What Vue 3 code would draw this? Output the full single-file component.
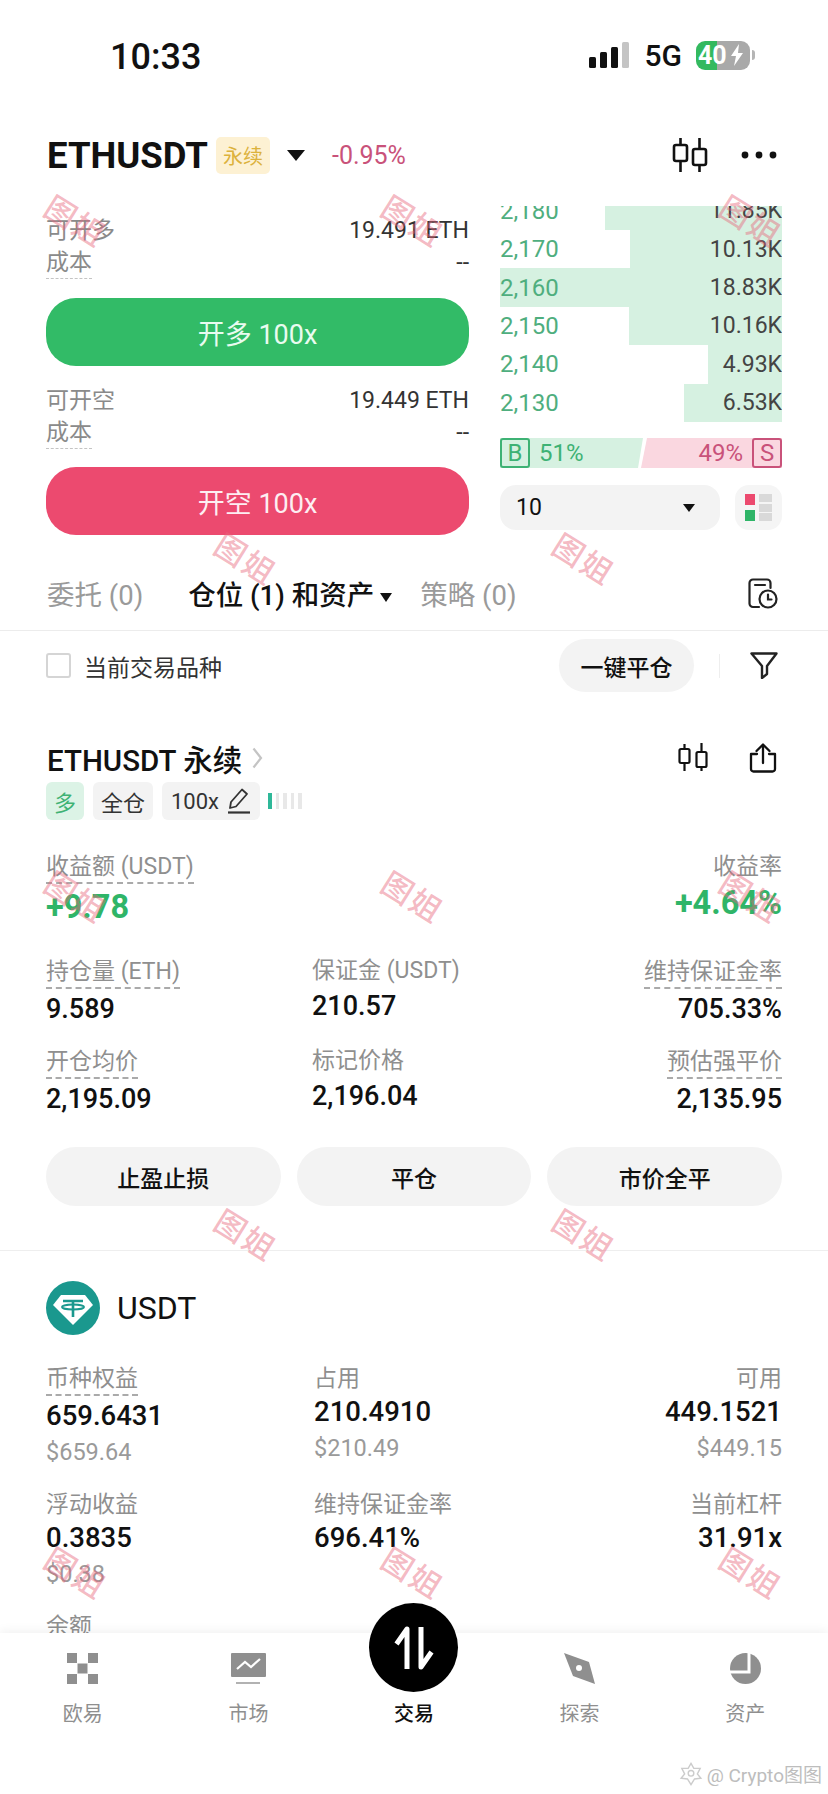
<script setup>
const book = [
  { price: '2,180', vol: '11.85K', width: 177 },
  { price: '2,170', vol: '10.13K', width: 152 },
  { price: '2,160', vol: '18.83K', width: 282 },
  { price: '2,150', vol: '10.16K', width: 153 },
  { price: '2,140', vol: '4.93K', width: 74 },
  { price: '2,130', vol: '6.53K', width: 98 }
]

const orderForms = [
  { label: '可开多', qty: '19.491 ETH', action: '开多 100x', kind: 'long' },
  { label: '可开空', qty: '19.449 ETH', action: '开空 100x', kind: 'short' }
]

const stats = [
  { label: '持仓量 (ETH)', value: '9.589', dash: true },
  { label: '保证金 (USDT)', value: '210.57', mid: true },
  { label: '维持保证金率', value: '705.33%', dash: true, end: true },
  { label: '开仓均价', value: '2,195.09', dash: true },
  { label: '标记价格', value: '2,196.04', mid: true },
  { label: '预估强平价', value: '2,135.95', dash: true, end: true }
]

const assets = [
  { label: '币种权益', value: '659.6431', sub: '$659.64', dash: true },
  { label: '占用', value: '210.4910', sub: '$210.49' },
  { label: '可用', value: '449.1521', sub: '$449.15', end: true },
  { label: '浮动收益', value: '0.3835', sub: '$0.38' },
  { label: '维持保证金率', value: '696.41%' },
  { label: '当前杠杆', value: '31.91x', end: true }
]

const marks = []
for (let row = 0; row < 5; row++) {
  const xs = row % 2 ? [245, 583] : [75, 412, 750]
  xs.forEach((x) => marks.push({ x, y: 222 + row * 338 }))
}
</script>

<template>
  <div class="phone">
    <div class="content">
      <!-- STATUS BAR -->
      <div class="status">
        <span class="clock">10:33</span>
        <div class="status-right">
          <svg width="41" height="26" viewBox="0 0 41 26">
            <rect x="0" y="15" width="7" height="11" rx="1.5" fill="#111" />
            <rect x="11" y="10" width="7" height="16" rx="1.5" fill="#111" />
            <rect x="22" y="5" width="7" height="21" rx="1.5" fill="#111" />
            <rect x="33" y="0" width="7" height="26" rx="1.5" fill="#c4c4c4" />
          </svg>
          <span class="net">5G</span>
          <div class="battery">
            <span>40</span>
            <svg width="14" height="22" viewBox="0 0 14 22"><path d="M9 0 L1 12 H6 L4 22 L13 9 H8 Z" fill="#fff" /></svg>
          </div>
          <i class="nub"></i>
        </div>
      </div>

      <!-- HEADER -->
      <div class="head">
        <span class="symbol">ETHUSDT</span>
        <span class="perp">永续</span>
        <i class="caret big"></i>
        <span class="change">-0.95%</span>
        <div class="head-icons">
          <svg width="37" height="36" viewBox="0 0 37 36" fill="none" stroke="#111" stroke-width="2.6" stroke-linejoin="round">
            <rect x="2" y="8" width="13" height="16" rx="2" />
            <path d="M8.5 1V8M8.5 24V35" />
            <rect x="21" y="12" width="13" height="16" rx="2" />
            <path d="M27.5 1V12M27.5 28V35" />
          </svg>
          <svg width="36" height="8" viewBox="0 0 36 8" fill="#111">
            <circle cx="4" cy="4" r="3.4" /><circle cx="18" cy="4" r="3.4" /><circle cx="32" cy="4" r="3.4" />
          </svg>
        </div>
      </div>

      <!-- ORDER PANEL + BOOK -->
      <div class="trade">
        <div class="forms">
          <div v-for="f in orderForms" :key="f.kind" class="form">
            <div class="form-row">
              <span class="muted">{{ f.label }}</span>
              <span class="qty">{{ f.qty }}</span>
            </div>
            <div class="form-row">
              <span class="muted cost">成本</span>
              <span class="qty">--</span>
            </div>
            <button class="open" :class="f.kind">{{ f.action }}</button>
          </div>
        </div>

        <div class="side">
          <div class="book">
            <div class="book-list">
              <div v-for="b in book" :key="b.price" class="book-row">
                <i class="depth" :style="{ width: b.width + 'px' }"></i>
                <span class="price">{{ b.price }}</span>
                <span class="vol">{{ b.vol }}</span>
              </div>
            </div>
          </div>

          <div class="ratio">
            <div class="buy"><b>B</b>51%</div>
            <div class="sell">49%<b>S</b></div>
          </div>

          <div class="book-ctrl">
            <div class="depth-select">
              <span>10</span>
              <i class="caret"></i>
            </div>
            <div class="layout-btn">
              <svg width="27" height="27" viewBox="0 0 27 27">
                <rect x="0" y="0" width="10" height="11" fill="#ec4a6f" />
                <rect x="0" y="16" width="10" height="11" fill="#2fb568" />
                <rect x="14" y="0" width="13" height="8" fill="#d9d9d9" />
                <rect x="14" y="10" width="13" height="8" fill="#d9d9d9" />
                <rect x="14" y="19" width="13" height="8" fill="#d9d9d9" />
              </svg>
            </div>
          </div>
        </div>
      </div>

      <!-- TABS -->
      <div class="tabs">
        <span class="tab">委托 (0)</span>
        <span class="tab on">仓位 (1) 和资产<i class="caret small"></i></span>
        <span class="tab">策略 (0)</span>
        <svg class="tab-icon" width="30" height="31" viewBox="0 0 30 31" fill="none" stroke="#222" stroke-width="2.2" stroke-linecap="round">
          <path d="M11 29H5a3.5 3.5 0 0 1-3.5-3.5V5A3.5 3.5 0 0 1 5 1.5h14A3.5 3.5 0 0 1 22.5 5V10" />
          <path d="M7 7H17" />
          <circle cx="20" cy="21" r="8.5" />
          <path d="M20 16.5V21.5H23.5" />
        </svg>
      </div>

      <!-- FILTER -->
      <div class="filter">
        <i class="check"></i>
        <span class="filter-label">当前交易品种</span>
        <button class="close-all">一键平仓</button>
        <i class="sep"></i>
        <svg width="28" height="27" viewBox="0 0 28 27" fill="none" stroke="#222" stroke-width="2.4" stroke-linejoin="round">
          <path d="M1.5 1.5H26.5L17 14V22L12 26V14Z" />
        </svg>
      </div>

      <!-- POSITION -->
      <div class="position">
        <div class="pos-title">
          <span class="pos-name">ETHUSDT 永续</span>
          <svg width="11" height="22" viewBox="0 0 11 22" fill="none" stroke="#c4c4c4" stroke-width="2.2"><path d="M1.5 1.5L9 11L1.5 20.5" /></svg>
          <div class="pos-icons">
            <svg width="30" height="29" viewBox="0 0 30 29" fill="none" stroke="#111" stroke-width="2.2">
              <rect x="1.5" y="6" width="10" height="14" rx="1.5" />
              <path d="M6.5 1V6M6.5 20V28" />
              <rect x="18.5" y="9" width="10" height="15" rx="1.5" />
              <path d="M23.5 0V9M23.5 24V28" />
            </svg>
            <svg width="28" height="30" viewBox="0 0 28 30" fill="none" stroke="#111" stroke-width="2.3" stroke-linecap="round" stroke-linejoin="round">
              <path d="M8 11H2V26a2.5 2.5 0 0 0 2.5 2.5h19A2.5 2.5 0 0 0 26 26V11H20" />
              <path d="M14 20V2M7.5 8L14 1.5L20.5 8" />
            </svg>
          </div>
        </div>
        <div class="tags">
          <span class="tag long-tag">多</span>
          <span class="tag">全仓</span>
          <span class="tag lev">100x
            <svg width="24" height="26" viewBox="0 0 24 26" fill="none" stroke="#333" stroke-width="1.8" stroke-linejoin="round">
              <path d="M15 1.5L20 6L9 18.5L3 20L4 14Z" /><path d="M1 24.5H23" stroke-width="2.2" />
            </svg>
          </span>
          <span class="lev-bars"><i class="active"></i><i></i><i></i><i></i><i></i></span>
        </div>

        <div class="pnl-row">
          <div class="cell">
            <span class="label dash">收益额 (USDT)</span>
            <span class="pnl">+9.78</span>
          </div>
          <div class="cell end">
            <span class="label">收益率</span>
            <span class="pnl">+4.64%</span>
          </div>
        </div>

        <div class="grid">
          <div v-for="s in stats" :key="s.label" class="cell" :class="{ end: s.end, mid: s.mid }">
            <span class="label" :class="{ dash: s.dash }">{{ s.label }}</span>
            <span class="value">{{ s.value }}</span>
          </div>
        </div>

        <div class="actions">
          <button>止盈止损</button>
          <button>平仓</button>
          <button>市价全平</button>
        </div>
      </div>

      <!-- ASSET -->
      <div class="asset">
        <div class="asset-head">
          <svg width="54" height="54" viewBox="0 0 54 54">
            <circle cx="27" cy="27" r="27" fill="#1a988e" />
            <path d="M15 14H39L47 24L27 44L7 24Z" fill="#fff" />
            <path d="M17 20H37M27 20V36" stroke="#1a988e" stroke-width="2.6" fill="none" />
            <ellipse cx="27" cy="26" rx="11" ry="2.6" stroke="#1a988e" stroke-width="2" fill="none" />
          </svg>
          <span class="coin">USDT</span>
        </div>
        <div class="grid asset-grid">
          <div v-for="a in assets" :key="a.label" class="cell" :class="{ end: a.end }">
            <span class="label" :class="{ dash: a.dash }">{{ a.label }}</span>
            <span class="value strong">{{ a.value }}</span>
            <span v-if="a.sub" class="sub">{{ a.sub }}</span>
          </div>
        </div>
        <span class="label balance">余额</span>
      </div>

      <!-- WATERMARKS -->
      <span
        v-for="m in marks"
        :key="m.x + '-' + m.y"
        class="mark"
        :style="{ left: m.x + 'px', top: m.y + 'px' }"
      >图姐</span>
    </div>

    <!-- TAB BAR -->
    <nav class="nav">
      <div class="nav-item">
        <svg width="31" height="31" viewBox="0 0 31 31" fill="#8f8f8f">
          <rect x="0" y="0" width="10" height="10" /><rect x="21" y="0" width="10" height="10" />
          <rect x="10.5" y="10.5" width="10" height="10" />
          <rect x="0" y="21" width="10" height="10" /><rect x="21" y="21" width="10" height="10" />
        </svg>
        <span>欧易</span>
      </div>
      <div class="nav-item">
        <svg width="35" height="31" viewBox="0 0 35 31">
          <rect x="0" y="0" width="35" height="24" rx="1" fill="#8f8f8f" />
          <path d="M6 16L14 9L20 14L29 6" fill="none" stroke="#fff" stroke-width="2.2" />
          <path d="M5 30H29" stroke="#aaa" stroke-width="1.8" />
        </svg>
        <span>市场</span>
      </div>
      <div class="nav-item on">
        <div class="trade-fab">
          <svg width="40" height="44" viewBox="0 0 40 44" fill="none" stroke="#fff" stroke-width="5" stroke-linejoin="round">
            <path d="M13 43V3L2.5 18" />
            <path d="M27 1V41L37.5 26" />
          </svg>
        </div>
        <i class="nav-gap"></i>
        <span>交易</span>
      </div>
      <div class="nav-item">
        <svg width="31" height="31" viewBox="0 0 31 31">
          <path d="M0 0L25 9L31 31L9 23Z" fill="#8f8f8f" />
          <circle cx="15" cy="15" r="3" fill="#fff" />
        </svg>
        <span>探索</span>
      </div>
      <div class="nav-item">
        <svg width="31" height="31" viewBox="0 0 31 31">
          <circle cx="15.5" cy="15.5" r="15.5" fill="#8f8f8f" />
          <path d="M19 0V19H0" fill="none" stroke="#fff" stroke-width="3" />
        </svg>
        <span>资产</span>
      </div>
      <div class="credit">
        <svg width="24" height="24" viewBox="0 0 34 34" fill="none" stroke="#cccccc" stroke-width="2">
          <path d="M17 2L21 9L30 9L26 17L31 23L22 24L17 32L12 24L3 23L8 17L4 9L13 9Z" />
          <circle cx="17" cy="16" r="4" />
        </svg>
        <span>@ Crypto图图</span>
      </div>
    </nav>
  </div>
</template>

<style>
html,
body {
  margin: 0;
  background: #fff;
}
</style>

<style scoped>
.phone {
  position: relative;
  display: flex;
  flex-direction: column;
  width: 828px;
  height: 1794px;
  overflow: hidden;
  background: #fff;
  color: #111;
  font-family: Roboto, "Noto Sans CJK SC", sans-serif;
}

.content {
  position: relative;
  flex: 1;
  min-height: 0;
  overflow: hidden;
}

button {
  border: 0;
  font-family: inherit;
  padding: 0;
}

/* STATUS */
.status {
  display: flex;
  justify-content: space-between;
  align-items: center;
  box-sizing: border-box;
  height: 110px;
  padding: 0 73px 0 110px;
}

.clock {
  margin-top: 4px;
  font-size: 36px;
  font-weight: 500;
}

.status-right {
  display: flex;
  align-items: center;
}

.net {
  margin: 0 14px 0 15px;
  font-size: 30px;
  font-weight: 500;
}

.battery {
  display: flex;
  align-items: center;
  gap: 3px;
  box-sizing: border-box;
  width: 54px;
  height: 29px;
  padding-left: 2px;
  border-radius: 9px;
  background: linear-gradient(to right, #33b95f 0 21px, #a9a9a9 21px);
  color: #fff;
  font-size: 25px;
  font-weight: 700;
}

.nub {
  width: 3px;
  height: 10px;
  margin-left: 2px;
  border-radius: 0 3px 3px 0;
  background: #b5b5b5;
}

/* HEADER */
.head {
  display: flex;
  align-items: center;
  box-sizing: border-box;
  height: 96px;
  padding: 0 51px 6px 47px;
}

.symbol {
  font-size: 36.5px;
  font-weight: 700;
}

.perp {
  display: flex;
  align-items: center;
  justify-content: center;
  width: 54px;
  height: 37px;
  margin-left: 8px;
  border-radius: 5px;
  background: #fdf1d3;
  color: #dcb23c;
  font-size: 20px;
}

.caret {
  display: inline-block;
  width: 0;
  height: 0;
  border-left: 8px solid transparent;
  border-right: 8px solid transparent;
  border-top: 10px solid #111;
}

.caret.big {
  margin-left: 17px;
  border-left-width: 9px;
  border-right-width: 9px;
  border-top-width: 11px;
}

.caret.small {
  margin-left: 6px;
  border-left-width: 6.5px;
  border-right-width: 6.5px;
  border-top-width: 9px;
  vertical-align: 3px;
}

.change {
  margin-left: 27px;
  color: #c9527a;
  font-size: 25px;
}

.head-icons {
  display: flex;
  align-items: center;
  gap: 32px;
  margin-left: auto;
}

/* TRADE */
.trade {
  display: flex;
  gap: 31px;
  padding: 0 46px;
}

.forms {
  width: 423px;
  padding-top: 10px;
}

.form + .form {
  margin-top: 20px;
}

.form-row {
  display: flex;
  justify-content: space-between;
  align-items: flex-start;
  height: 32px;
  line-height: 30px;
}

.muted {
  color: #8a8a8a;
  font-size: 23px;
}

.cost {
  border-bottom: 1.5px dashed #c4c4c4;
}

.qty {
  color: #333;
  font-size: 23px;
}

.open {
  display: block;
  width: 423px;
  height: 68px;
  margin-top: 18px;
  border-radius: 30px;
  color: #e9fbf0;
  font-size: 27px;
}

.open.long {
  background: #32bb67;
}

.open.short {
  margin-top: 17px;
  background: #ec4a6f;
  color: #fdeef2;
}

.side {
  width: 282px;
}

.book {
  height: 216px;
  overflow: hidden;
}

.book-list {
  margin-top: -14.4px;
}

.book-row {
  position: relative;
  display: flex;
  justify-content: space-between;
  align-items: center;
  height: 38.4px;
  font-size: 23px;
}

.depth {
  position: absolute;
  top: 0;
  right: 0;
  bottom: 0;
  background: #d6f1e1;
}

.price,
.vol {
  position: relative;
}

.price {
  color: #4fae7e;
  font-size: 24px;
}

.vol {
  color: #444;
}

.ratio {
  display: flex;
  height: 30px;
  margin-top: 16px;
  font-size: 24px;
}

.buy,
.sell {
  display: flex;
  align-items: center;
}

.buy {
  gap: 9px;
  width: 143px;
  background: #d6f1e1;
  color: #3eb274;
  clip-path: polygon(0 0, 100% 0, calc(100% - 5px) 100%, 0 100%);
}

.sell {
  flex: 1;
  justify-content: flex-end;
  gap: 9px;
  margin-left: -2px;
  background: #fad7e0;
  color: #c9527a;
  clip-path: polygon(6px 0, 100% 0, 100% 100%, 0 100%);
}

.buy b,
.sell b {
  display: flex;
  align-items: center;
  justify-content: center;
  box-sizing: border-box;
  width: 30px;
  height: 30px;
  border: 2px solid;
  border-radius: 3px;
  font-weight: 400;
}

.book-ctrl {
  display: flex;
  justify-content: space-between;
  margin-top: 17px;
}

.depth-select {
  display: flex;
  justify-content: space-between;
  align-items: center;
  box-sizing: border-box;
  width: 220px;
  height: 45px;
  padding: 0 25px 0 16px;
  border-radius: 16px;
  background: #f3f3f3;
  font-size: 23px;
}

.depth-select .caret {
  border-left-width: 6px;
  border-right-width: 6px;
  border-top-width: 8px;
}

.layout-btn {
  display: flex;
  align-items: center;
  justify-content: center;
  width: 47px;
  height: 45px;
  border-radius: 14px;
  background: #f5f5f5;
}

/* TABS */
.tabs {
  display: flex;
  align-items: center;
  box-sizing: border-box;
  height: 66px;
  margin-top: 30px;
  padding: 0 50px 9px 47px;
  border-bottom: 1px solid #ececec;
}

.tab {
  margin-right: 45px;
  color: #9a9a9a;
  font-size: 27.5px;
}

.tab.on {
  margin-right: 28px;
  color: #111;
  font-weight: 500;
}

.tab-icon {
  margin-left: auto;
}

/* FILTER */
.filter {
  display: flex;
  align-items: center;
  margin-top: 8px;
  padding: 0 50px 0 46px;
}

.check {
  box-sizing: border-box;
  width: 25px;
  height: 25px;
  border: 2px solid #d5d5d5;
  border-radius: 3px;
}

.filter-label {
  margin-left: 13px;
  color: #333;
  font-size: 23px;
}

.close-all {
  width: 135px;
  height: 53px;
  margin-left: auto;
  border-radius: 27px;
  background: #f3f3f3;
  color: #111;
  font-size: 23px;
  font-weight: 500;
}

.sep {
  width: 1px;
  height: 24px;
  margin: 0 30px 0 25px;
  background: #eee;
}

/* POSITION */
.position {
  margin-top: 46px;
  padding: 0 46px 44px;
  border-bottom: 1px solid #eeeeee;
}

.pos-title {
  display: flex;
  align-items: center;
  gap: 10px;
  height: 40px;
}

.pos-name {
  margin-left: 1px;
  font-size: 29.5px;
  font-weight: 500;
}

.pos-icons {
  display: flex;
  gap: 41px;
  margin-left: auto;
  margin-right: 5px;
}

.tags {
  display: flex;
  align-items: center;
  gap: 9px;
  margin-top: 4px;
}

.tag {
  display: flex;
  align-items: center;
  justify-content: center;
  gap: 8px;
  width: 60px;
  height: 38px;
  border-radius: 6px;
  background: #f3f3f3;
  color: #333;
  font-size: 22px;
}

.long-tag {
  width: 38px;
  background: #dcf3e6;
  color: #3eb274;
}

.lev {
  width: 98px;
}

.lev-bars {
  display: flex;
  gap: 4px;
  margin-left: -1px;
}

.lev-bars i {
  width: 3.5px;
  height: 16px;
  background: #e8e8e8;
}

.lev-bars i.active {
  background: #2fb899;
}

.pnl-row {
  display: flex;
  justify-content: space-between;
  margin-top: 32px;
  margin-bottom: 29px;
}

.cell {
  display: flex;
  flex-direction: column;
  align-items: flex-start;
}

.cell.end {
  align-items: flex-end;
}

.cell.mid {
  margin-top: -1px;
}

.cell.mid .value {
  margin-top: 2px;
}

.label {
  color: #8f8f8f;
  font-size: 23px;
  line-height: 30px;
}

.label.dash {
  margin-bottom: 2px;
  border-bottom: 2px dashed #aaa;
}

.pnl {
  color: #2fb568;
  font-size: 32.5px;
  font-weight: 700;
  line-height: 42px;
}

.grid {
  display: grid;
  grid-template-columns: 266px 1fr auto;
  row-gap: 20px;
}

.value {
  font-size: 27px;
  font-weight: 500;
  line-height: 36px;
}

.value.strong {
  font-size: 27.5px;
}

.sub {
  color: #9a9a9a;
  font-size: 23.5px;
  line-height: 36px;
}

.actions {
  display: grid;
  grid-template-columns: repeat(3, 1fr);
  gap: 16px;
  margin-top: 30px;
}

.actions button {
  height: 59px;
  border-radius: 30px;
  background: #f3f3f3;
  color: #111;
  font-size: 23px;
  font-weight: 500;
}

/* ASSET */
.asset {
  padding: 30px 46px 0;
}

.asset-head {
  display: flex;
  align-items: center;
  gap: 17px;
  margin-bottom: 29px;
}

.coin {
  font-size: 32px;
}

.asset-grid {
  grid-template-columns: 268px 1fr auto;
}

.balance {
  display: block;
  margin-top: 20px;
}

/* WATERMARK */
.mark {
  position: absolute;
  color: rgba(232, 100, 122, 0.45);
  font-size: 31px;
  font-weight: 500;
  letter-spacing: 2px;
  line-height: 1;
  white-space: nowrap;
  pointer-events: none;
  transform: translate(-50%, -50%) rotate(32deg);
}

/* NAV */
.nav {
  position: relative;
  display: grid;
  grid-template-columns: repeat(5, 1fr);
  flex: none;
  box-sizing: border-box;
  height: 161px;
  padding: 20px 0 0;
  background: #fff;
  box-shadow: 0 -3px 9px rgba(0, 0, 0, 0.05);
}

.nav-item {
  position: relative;
  display: flex;
  flex-direction: column;
  align-items: center;
  height: 80px;
  color: #8f8f8f;
  font-size: 20px;
}

.nav-item svg {
  flex: none;
}

.nav-item span {
  position: absolute;
  top: 47px;
  line-height: 28px;
}

.nav-item.on {
  color: #111;
  font-weight: 500;
}

.nav-gap {
  height: 31px;
}

.trade-fab {
  position: absolute;
  top: -50px;
  display: flex;
  align-items: center;
  justify-content: center;
  width: 89px;
  height: 89px;
  border-radius: 50%;
  background: #000;
}

.credit {
  position: absolute;
  right: 6px;
  bottom: 7px;
  display: flex;
  align-items: center;
  gap: 4px;
  color: #bdbdbd;
  font-size: 19px;
}
</style>
